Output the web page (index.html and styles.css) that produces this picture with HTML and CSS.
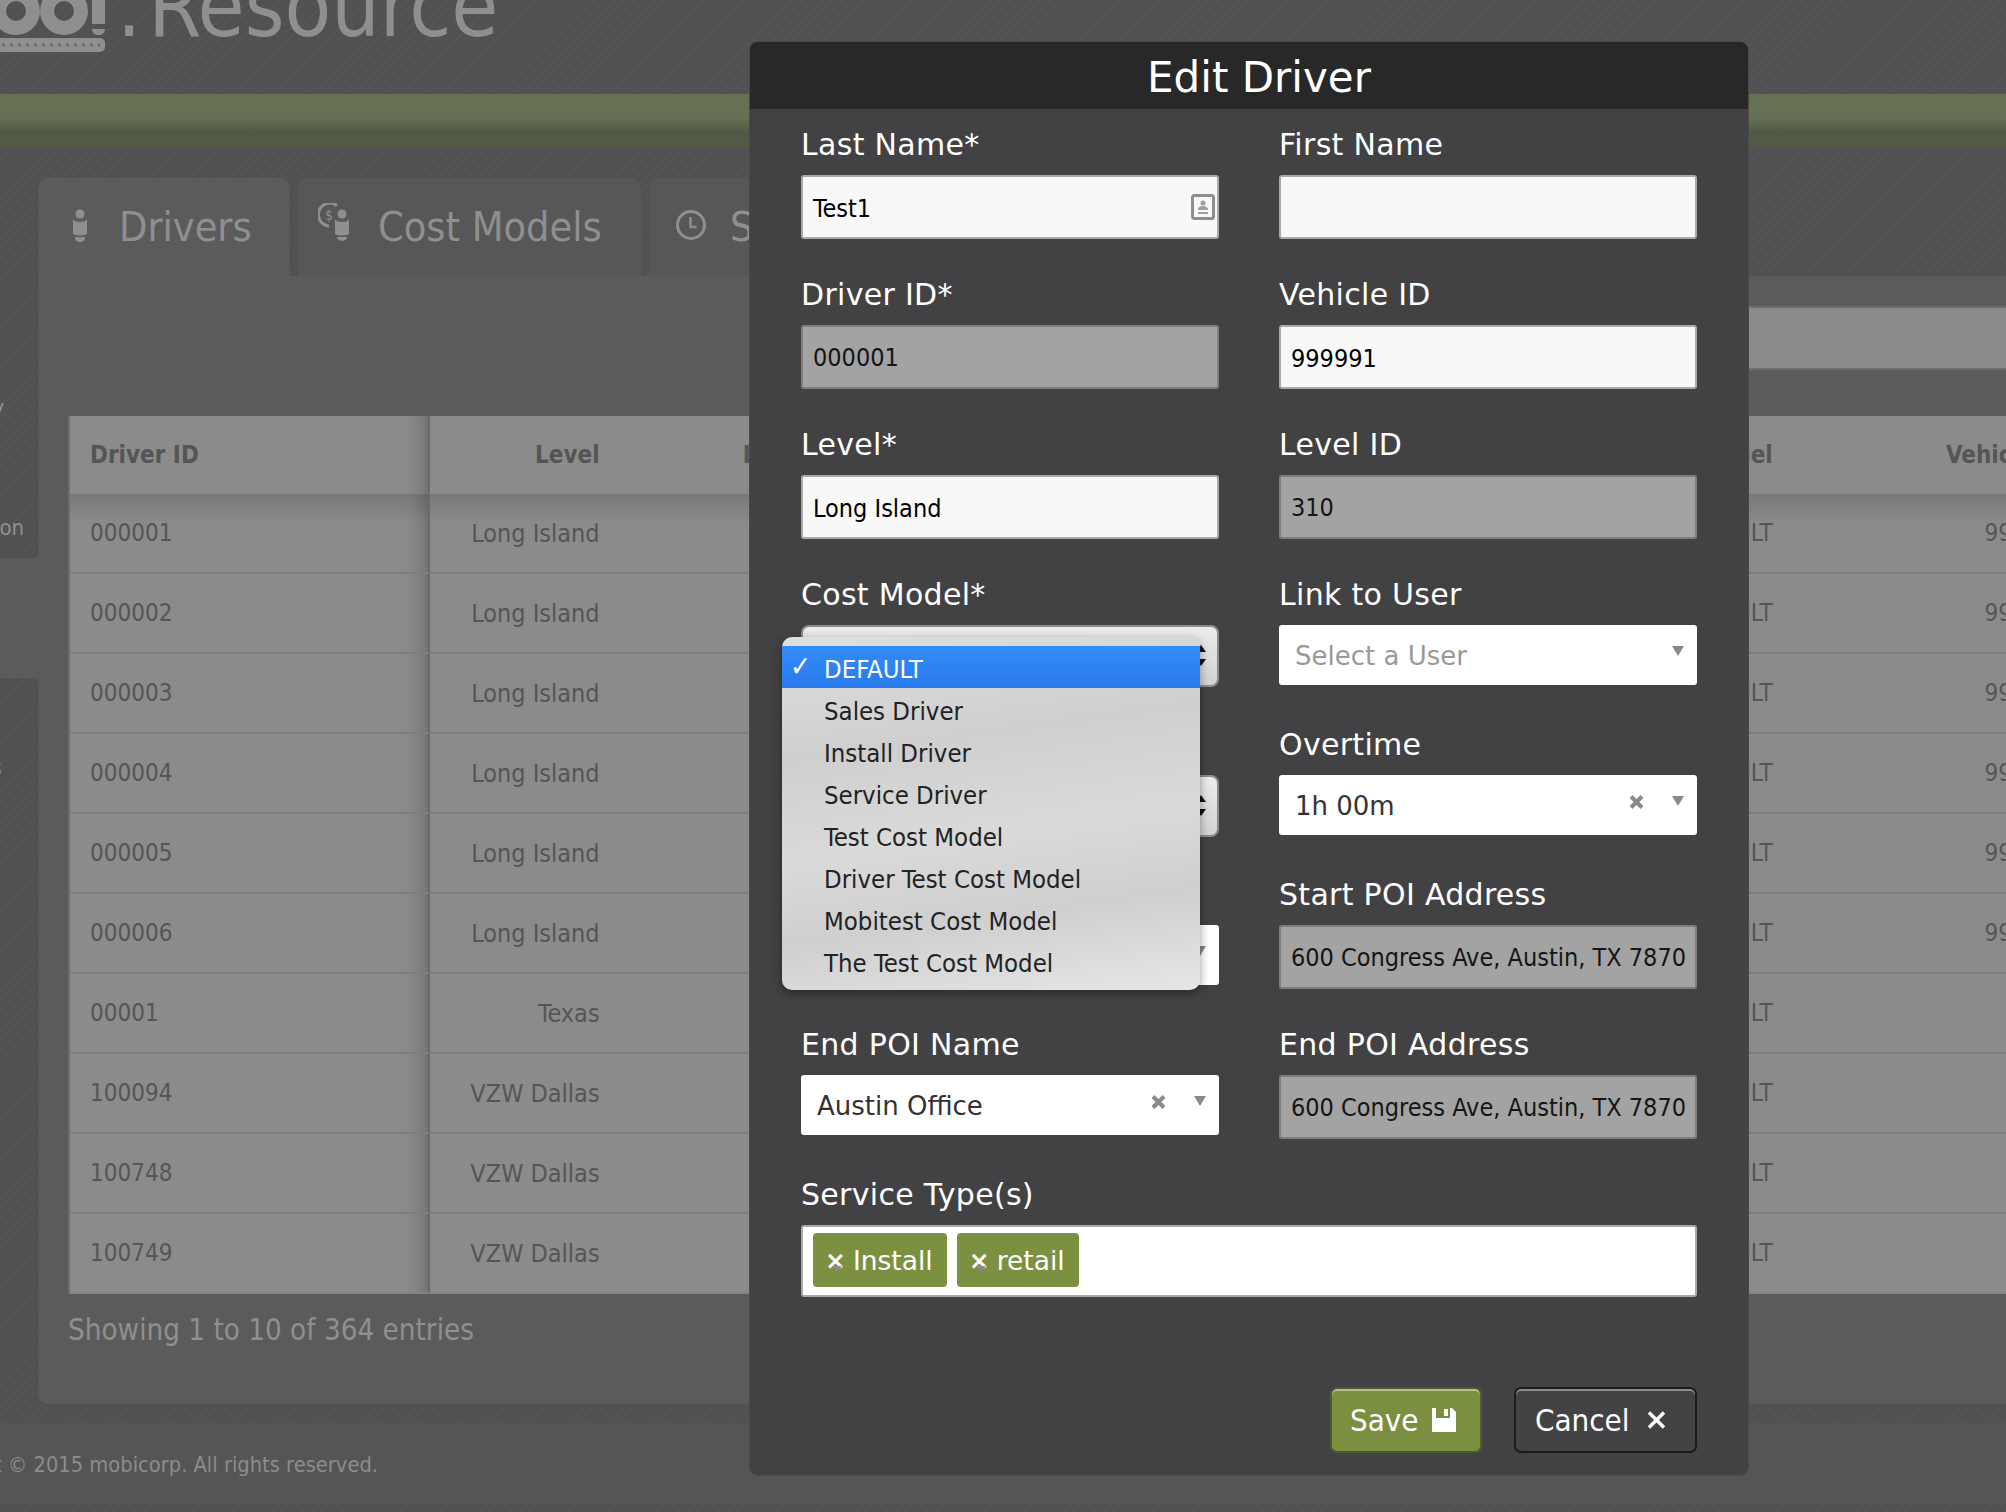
FILE: index.html
```html
<!DOCTYPE html>
<html lang="en">
<head>
    <meta charset="UTF-8">
    <title>Resource - Edit Driver</title>
    <link rel="stylesheet" href="styles.css">
</head>
<body>
    <header class="brand">
        <svg class="logo" width="110" height="56" viewBox="0 0 110 56">
            <circle cx="16" cy="11" r="17" fill="none" stroke="#8f8f8f" stroke-width="14"/>
            <circle cx="64" cy="11" r="17" fill="none" stroke="#8f8f8f" stroke-width="14"/>
            <path d="M92 0h13v24H92zM92 29h13c0 4-3 6-6.500 6S92 33 92 29z" fill="#8f8f8f"/>
            <rect x="-8" y="38" width="113" height="14" rx="5" fill="#8f8f8f"/>
            <path d="M2 45H100" stroke="#6a6a6a" stroke-width="3" stroke-dasharray="3 5"/>
        </svg>
        <span class="brand-name"><span class="brand-dot">.</span>Resource</span>
    </header>
    <div class="greenbar"></div>

    <div class="page">
        <nav class="sidenav">
            <div class="nav-item">Inventory</div>
            <div class="nav-item">Configuration</div>
            <div class="nav-item active"></div>
            <div class="nav-item">Analytics</div>
        </nav>
        <main class="content">
            <div class="tabs">
                <div class="tab active">
                    <svg class="tab-icon" width="16" height="34" viewBox="0 0 16 34">
                        <circle cx="8" cy="5" r="4.500" fill="#8f8f8f"/>
                        <path d="M1 10c1 2 3 3 7 3s6-1 7-3v15c-2 1-4 1.500-7 1.500S3 26 1 25zM3 28h10v2c-1 2-3 3-5 3s-4-1-5-3z" fill="#8f8f8f"/>
                    </svg>
                    Drivers
                </div>
                <div class="tab second">
                    <svg class="tab-icon" width="32" height="39" viewBox="0 0 32 39">
                        <path d="M19 2.500A11.500 11.500 0 1 0 11 23" fill="none" stroke="#8f8f8f" stroke-width="3"/>
                        <text x="7" y="17" class="dollar">$</text>
                        <circle cx="24" cy="11" r="4.500" fill="#8f8f8f"/>
                        <path d="M17 16c1 2 3 3 7 3s6-1 7-3v15c-2 1-4 1.500-7 1.500S19 32 17 31zM19 34h10v1c-1 2-3 3-5 3s-4-1-5-3z" fill="#8f8f8f"/>
                    </svg>
                    Cost Models
                </div>
                <div class="tab third">
                    <svg class="tab-icon" width="32" height="32" viewBox="0 0 32 32">
                        <circle cx="16" cy="16" r="13.500" fill="none" stroke="#8f8f8f" stroke-width="3"/>
                        <path d="M15.500 8v10h6" fill="none" stroke="#8f8f8f" stroke-width="2.500"/>
                    </svg>
                    Schedules
                </div>
            </div>
            <div class="panel">
                <div class="searchrow"><div class="searchbox"></div></div>
                <div class="table-wrap">
                    <table class="drivers">
                        <colgroup>
                            <col class="c-id"><col class="c-level"><col class="c-name"><col class="c-model"><col class="c-vehicle">
                        </colgroup>
                        <thead>
                            <tr><th class="first">Driver ID</th><th class="level">Level</th><th class="name">Last Name</th><th class="model">Cost Model</th><th class="vehicle">Vehicle ID</th></tr>
                        </thead>
                        <tbody>
                            <tr><td class="first">000001</td><td class="level">Long Island</td><td></td><td class="model">DEFAULT</td><td class="vehicle">999991</td></tr>
                            <tr><td class="first">000002</td><td class="level">Long Island</td><td></td><td class="model">DEFAULT</td><td class="vehicle">999992</td></tr>
                            <tr><td class="first">000003</td><td class="level">Long Island</td><td></td><td class="model">DEFAULT</td><td class="vehicle">999993</td></tr>
                            <tr><td class="first">000004</td><td class="level">Long Island</td><td></td><td class="model">DEFAULT</td><td class="vehicle">999994</td></tr>
                            <tr><td class="first">000005</td><td class="level">Long Island</td><td></td><td class="model">DEFAULT</td><td class="vehicle">999995</td></tr>
                            <tr><td class="first">000006</td><td class="level">Long Island</td><td></td><td class="model">DEFAULT</td><td class="vehicle">999996</td></tr>
                            <tr><td class="first">00001</td><td class="level">Texas</td><td></td><td class="model">DEFAULT</td><td class="vehicle"></td></tr>
                            <tr><td class="first">100094</td><td class="level">VZW Dallas</td><td></td><td class="model">DEFAULT</td><td class="vehicle"></td></tr>
                            <tr><td class="first">100748</td><td class="level">VZW Dallas</td><td></td><td class="model">DEFAULT</td><td class="vehicle"></td></tr>
                            <tr><td class="first">100749</td><td class="level">VZW Dallas</td><td></td><td class="model">DEFAULT</td><td class="vehicle"></td></tr>
                        </tbody>
                    </table>
                </div>
                <p class="entries">Showing 1 to 10 of 364 entries</p>
            </div>
        </main>
    </div>

    <footer class="footer"><div class="copyright"><span>Copyright © 2015 mobicorp. All rights reserved.</span></div></footer>

    <div class="modal">
        <h2 class="modal-title">Edit Driver</h2>
        <div class="form-grid">
            <div class="field">
                <label>Last Name*</label>
                <div class="input">Test1
                    <svg class="card-icon" width="24" height="26" viewBox="0 0 24 26">
                        <rect x="1.500" y="1.500" width="21" height="23" rx="2" fill="none" stroke="#8e8e8e" stroke-width="3"/>
                        <circle cx="12" cy="9" r="2.500" fill="#a0a0a0"/>
                        <path d="M7 16c0-3 2-4 5-4s5 1 5 4zM7 18h10v2H7z" fill="#a0a0a0"/>
                    </svg>
                </div>
            </div>
            <div class="field">
                <label>First Name</label>
                <div class="input"></div>
            </div>
            <div class="field">
                <label>Driver ID*</label>
                <div class="input disabled">000001</div>
            </div>
            <div class="field">
                <label>Vehicle ID</label>
                <div class="input">999991</div>
            </div>
            <div class="field">
                <label>Level*</label>
                <div class="input">Long Island</div>
            </div>
            <div class="field">
                <label>Level ID</label>
                <div class="input disabled">310</div>
            </div>
            <div class="field">
                <label>Cost Model*</label>
                <div class="native-select"></div>
            </div>
            <div class="field">
                <label>Link to User</label>
                <div class="picker placeholder">Select a User<span class="arrow"></span></div>
            </div>
            <div class="field">
                <label></label>
                <div class="native-select"></div>
            </div>
            <div class="field">
                <label>Overtime</label>
                <div class="picker">1h 00m
                    <svg class="clear" width="15" height="14" viewBox="0 0 15 14"><path d="M2 1.500l11 11M13 1.500l-11 11" stroke="#8a8a8a" stroke-width="4"/></svg>
                    <span class="arrow"></span>
                </div>
            </div>
            <div class="field">
                <label></label>
                <div class="picker"><span class="arrow"></span></div>
            </div>
            <div class="field">
                <label>Start POI Address</label>
                <div class="input disabled"><span class="clip">600 Congress Ave, Austin, TX 78701</span></div>
            </div>
            <div class="field">
                <label>End POI Name</label>
                <div class="picker">Austin Office
                    <svg class="clear" width="15" height="14" viewBox="0 0 15 14"><path d="M2 1.500l11 11M13 1.500l-11 11" stroke="#8a8a8a" stroke-width="4"/></svg>
                    <span class="arrow"></span>
                </div>
            </div>
            <div class="field">
                <label>End POI Address</label>
                <div class="input disabled"><span class="clip">600 Congress Ave, Austin, TX 78701</span></div>
            </div>
            <div class="field wide">
                <label>Service Type(s)</label>
                <div class="tags">
                    <span class="tag"><i class="tag-x">×</i>Install</span>
                    <span class="tag"><i class="tag-x">×</i>retail</span>
                </div>
            </div>
        </div>
        <div class="modal-actions">
            <div class="btn save">Save
                <svg width="24" height="24" viewBox="0 0 24 24"><path d="M0 0h4v10h14V0h2l4 4v20H0zM12 1h4v7h-4z" fill="#fff"/></svg>
            </div>
            <div class="btn cancel">Cancel
                <svg width="19" height="18" viewBox="0 0 19 18"><path d="M2 1.500l15 15M17 1.500l-15 15" stroke="#fff" stroke-width="3.500"/></svg>
            </div>
        </div>

        <ul class="select-menu">
            <li class="selected"><span class="check">✓</span>DEFAULT</li>
            <li>Sales Driver</li>
            <li>Install Driver</li>
            <li>Service Driver</li>
            <li>Test Cost Model</li>
            <li>Driver Test Cost Model</li>
            <li>Mobitest Cost Model</li>
            <li>The Test Cost Model</li>
        </ul>
    </div>
</body>
</html>
```

FILE: styles.css
```css
* {
    box-sizing: border-box;
}
html, body {
    height: 100%;
}
body {
    margin: 0;
    width: 2006px;
    height: 1512px;
    overflow: hidden;
    position: relative;
    font-family: "DejaVu Sans", sans-serif;
    font-stretch: condensed;
    color: #555;
    background: repeating-linear-gradient(135deg, #545456 0 2px, #515153 2px 7px);
}

/* header */
.brand {
    height: 94px;
    display: flex;
    position: relative;
}
.logo {
    flex: none;
    margin-top: 0;
}
.brand-name {
    margin-left: 7px;
    margin-top: -63px;
    font-size: 85px;
    line-height: 140px;
    color: #8f8f8f;
    height: 140px;
}
.brand-dot {
    margin-right: 7px;
}
.greenbar {
    height: 54px;
    background: linear-gradient(to bottom, #667053 0, #667053 45%, #525a46 70%, #525a46 100%);
}

/* page body */
.page {
    display: flex;
    padding-top: 30px;
    height: 1275px;
}
.sidenav {
    flex: none;
    width: 38px;
    padding-top: 140px;
    overflow: hidden;
    position: relative;
}
.nav-item {
    height: 120px;
    width: 240px;
    margin-left: -163px;
    padding-top: 76px;
    line-height: 28px;
    font-size: 22px;
    text-align: center;
    white-space: nowrap;
    color: #8f8f8f;
}
.nav-item.active {
    margin-left: 0;
    background: #5b5b5b;
}
.content {
    flex: 1;
    min-width: 0;
}
.tabs {
    display: flex;
    gap: 8px;
    height: 98px;
}
.tab {
    flex: none;
    height: 98px;
    padding: 19px 0 0 34px;
    display: flex;
    align-items: flex-start;
    gap: 31px;
    font-size: 41px;
    line-height: 61px;
    color: #8f8f8f;
    background: #575757;
    border-radius: 10px 10px 0 0;
    white-space: nowrap;
}
.tab.active {
    width: 252px;
    background: #5b5b5b;
}
.tab.second {
    width: 343px;
    padding-left: 20px;
    gap: 28px;
}
.tab.third {
    width: 343px;
    padding-left: 26px;
    gap: 23px;
}
.tab-icon {
    flex: none;
    margin-top: 12px;
}
.tab.second .tab-icon {
    margin-top: 6px;
}
.dollar {
    font-size: 14px;
    fill: #8f8f8f;
}
.panel {
    height: 1128px;
    background: #5b5b5b;
    border-radius: 0 0 0 10px;
    padding-top: 30px;
}
.searchrow {
    display: flex;
    justify-content: flex-end;
    height: 64px;
}
.searchbox {
    width: 800px;
    background: #8b8b8b;
    border-top: 2px solid #6e6e6e;
    border-bottom: 2px solid #6e6e6e;
}
.table-wrap {
    margin: 46px 0 0 30px;
    overflow: hidden;
    border-left: 2px solid #6e6e6e;
}
.drivers {
    width: 2017px;
    table-layout: fixed;
    border-spacing: 0;
    background: #8b8b8b;
    font-size: 24px;
    color: #555;
}
.c-id { width: 358px; }
.c-level { width: 294px; }
.c-name { width: 500px; }
.c-model { width: 569px; }
.c-vehicle { width: 294px; }
.drivers th {
    height: 78px;
    padding: 0 20px;
    font-weight: bold;
    text-align: left;
}
.drivers td {
    height: 80px;
    padding: 0 20px;
    border-bottom: 2px solid #7e7e7e;
    white-space: nowrap;
}
.drivers tbody tr:first-child td {
    background: linear-gradient(to bottom, #797979 0, #8b8b8b 30px);
}
.drivers tbody tr:last-child td {
    border-bottom-color: #848484;
}
.drivers .first {
    box-shadow: inset -22px 0 18px -18px rgba(0, 0, 0, .25);
}
.drivers .level {
    border-left: 2px solid #6a6a6a;
    text-align: right;
    padding-right: 123px;
}
.drivers td.level {
    font-size: 25px;
}
.drivers .model, .drivers .vehicle {
    text-align: right;
}
.drivers th.name {
    text-align: left;
}
.entries {
    margin: 19px 0 0 30px;
    font-size: 29.300px;
    line-height: 34px;
    color: #8f8f8f;
}

/* footer */
.footer {
    position: absolute;
    left: 0;
    right: 0;
    top: 1423px;
    height: 81px;
    background: #555;
    padding-top: 27px;
}
.copyright {
    width: 378px;
    display: flex;
    justify-content: flex-end;
    overflow: hidden;
    white-space: nowrap;
    font-size: 21.700px;
    line-height: 30px;
    color: #8c8c8c;
}
.copyright span {
    flex: none;
}

/* modal */
.modal {
    position: absolute;
    left: 750px;
    top: 42px;
    width: 998px;
    height: 1433px;
    background: #424244;
    border-radius: 8px;
    color: #fff;
    box-shadow: 0 0 0 1px #4a4a4c;
    font-stretch: normal;
}
.modal-title {
    margin: 0;
    height: 67px;
    background: #282828;
    border-radius: 8px 8px 0 0;
    padding-left: 20px;
    text-align: center;
    font-size: 42px;
    font-weight: normal;
    line-height: 72px;
}
.form-grid {
    display: grid;
    grid-template-columns: 418px 418px;
    column-gap: 60px;
    grid-auto-rows: 150px;
    padding-left: 51px;
}
.field {
    min-width: 0;
}
.field.wide {
    grid-column: 1 / 3;
}
.field label {
    display: block;
    height: 66px;
    font-size: 30px;
    line-height: 71px;
    letter-spacing: .3px;
}
.input {
    height: 64px;
    padding: 2px 10px 0;
    display: flex;
    align-items: center;
    justify-content: space-between;
    background: #f8f8f8;
    border: 2px solid #a9a9a9;
    border-radius: 3px;
    color: #000;
    font-size: 25px;
    font-stretch: condensed;
    white-space: nowrap;
    overflow: hidden;
}
.input.disabled {
    display: block;
    padding-top: 0;
    line-height: 61px;
    background: #a3a3a3;
    border-color: #7f7f7f;
    color: #151515;
}
.clip {
    display: block;
    overflow: hidden;
}
.card-icon {
    flex: none;
    margin: -2px -8px 0 0;
}
.picker {
    position: relative;
    height: 60px;
    padding-left: 16px;
    background: #fff;
    border-radius: 3px;
    color: #333;
    font-size: 26px;
    line-height: 62px;
}
.picker.placeholder {
    color: #999;
}
.arrow {
    position: absolute;
    right: 13px;
    top: 21px;
    width: 0;
    height: 0;
    border-left: 6px solid transparent;
    border-right: 6px solid transparent;
    border-top: 10px solid #8a8a8a;
}
.clear {
    position: absolute;
    right: 53px;
    top: 20px;
}
.native-select {
    position: relative;
    height: 62px;
    background: linear-gradient(to bottom, #ececec, #d2d2d2);
    border: 2px solid #8c8c8c;
    border-radius: 8px;
}
.native-select::before, .native-select::after {
    content: "";
    position: absolute;
    right: 11px;
    width: 0;
    height: 0;
    border-left: 5px solid transparent;
    border-right: 5px solid transparent;
}
.native-select::before {
    top: 18px;
    border-bottom: 7px solid #111;
}
.native-select::after {
    top: 32px;
    border-top: 7px solid #111;
}
.tags {
    display: flex;
    gap: 10px;
    height: 72px;
    padding: 6px 10px;
    background: #fff;
    border: 2px solid #a9a9a9;
    border-radius: 3px;
}
.tag {
    position: relative;
    height: 54px;
    padding: 0 14px 0 12px;
    display: flex;
    align-items: center;
    gap: 7px;
    background: #7b9141;
    border-radius: 4px;
    color: #fff;
    font-size: 26.500px;
}
.tag-x {
    font-style: normal;
    font-weight: bold;
    font-size: 25px;
}
.tag::after {
    content: "";
    position: absolute;
    left: 19px;
    top: 33px;
    width: 0;
    height: 0;
    border-left: 5px solid transparent;
    border-right: 5px solid transparent;
    border-top: 6px solid #8a8a8a;
}
.modal-actions {
    display: flex;
    justify-content: flex-end;
    gap: 32px;
    margin-top: 78px;
    padding-right: 51px;
}
.btn {
    height: 66px;
    display: flex;
    align-items: center;
    font-size: 31px;
    font-stretch: condensed;
    border-radius: 7px;
    color: #fff;
}
.btn.save {
    width: 152px;
    padding-left: 18px;
    gap: 14px;
    background: #7a9040;
    border: 2px solid #4c5c2a;
    box-shadow: inset 0 2px 0 #b3c190;
}
.btn.cancel {
    width: 183px;
    padding-left: 19px;
    gap: 17px;
    background: #434345;
    border: 2px solid #1c1c1e;
    box-shadow: inset 0 2px 0 #8a8a8a;
}

/* open select list, sits over the form */
.select-menu {
    position: absolute;
    left: 32px;
    top: 595px;
    width: 418px;
    height: 353px;
    margin: 0;
    padding: 9px 0 0;
    list-style: none;
    border-radius: 10px;
    background: linear-gradient(172deg, #dfdfdf 0, #cfcfcf 30%, #dadada 55%, #cfcfcf 75%, #e6e6e6 100%);
    box-shadow: 0 3px 10px rgba(0, 0, 0, .4);
    color: #222;
    font-size: 25.500px;
    font-stretch: condensed;
}
.select-menu li {
    position: relative;
    height: 42px;
    line-height: 46px;
    padding-left: 42px;
    white-space: nowrap;
}
.select-menu li.selected {
    background: linear-gradient(to bottom, #338cf8, #2a7aec);
    color: #fff;
}
.check {
    position: absolute;
    left: 8px;
    top: -2px;
    font-weight: bold;
    font-size: 28px;
}
```
